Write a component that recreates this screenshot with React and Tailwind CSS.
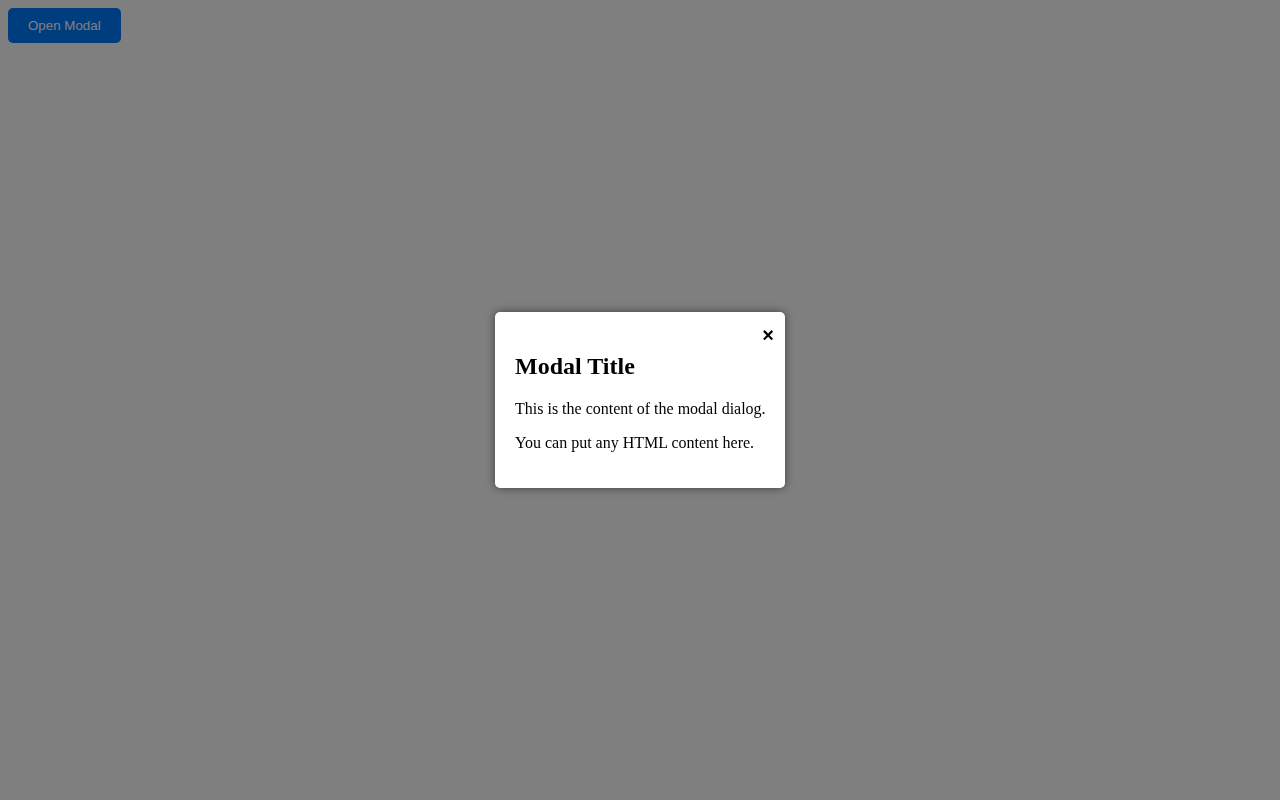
export default function App() {
  return (
    <div className="min-h-screen bg-white" style={{ fontFamily: '"Liberation Serif", serif' }}>
      <button
        className="m-2 px-5 py-[10px] rounded-[5px] bg-[#007bff] text-white text-[13.33px] leading-[normal]"
        style={{ fontFamily: '"Liberation Sans", Arial, sans-serif' }}
      >
        Open Modal
      </button>

      {/* dimmed backdrop with the dialog centred on it */}
      <div className="fixed inset-0 bg-[rgba(0,0,0,0.5)] flex items-center justify-center">
        <div className="relative w-[290px] bg-white rounded-[5px] px-5 pt-[21px] pb-5 text-black shadow-[0_0_10px_rgba(0,0,0,0.5)]">
          <span
            className="absolute top-[12px] right-[11px] text-[20px] font-bold leading-[normal] cursor-pointer"
            style={{ fontFamily: '"Liberation Sans", Arial, sans-serif' }}
          >
            ×
          </span>
          <h2 className="text-[24px] font-bold leading-[normal] mt-[20px] mb-[20px]">Modal Title</h2>
          <p className="text-[16px] leading-[normal] mb-4 whitespace-nowrap">This is the content of the modal dialog.</p>
          <p className="text-[16px] leading-[normal] mb-4">You can put any HTML content here.</p>
        </div>
      </div>
    </div>
  );
}
